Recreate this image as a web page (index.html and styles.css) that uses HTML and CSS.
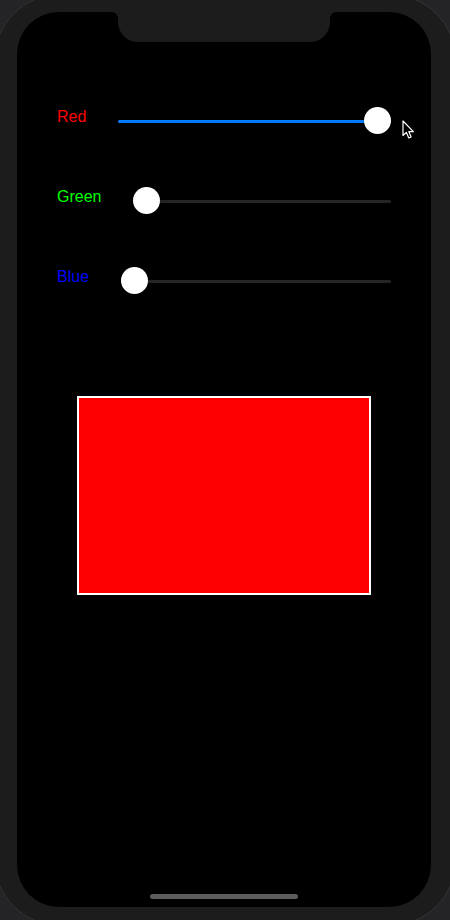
FILE: index.html
```html
<!DOCTYPE html>
<html lang="en">
<head>
<meta charset="utf-8">
<title>Color Sliders</title>
<link rel="stylesheet" href="styles.css">
</head>
<body>
<div class="device">
  <div class="screen">
    <div class="notch"></div>
    <div class="controls">
      <div class="row">
        <span class="label label-red">Red</span>
        <div class="slider">
          <div class="track"></div>
          <div class="fill" style="width: 100%"></div>
          <div class="thumb" style="left: calc((100% - 27px) * 1)"></div>
        </div>
      </div>
      <div class="row">
        <span class="label label-green">Green</span>
        <div class="slider">
          <div class="track"></div>
          <div class="fill" style="width: 0%"></div>
          <div class="thumb" style="left: calc((100% - 27px) * 0)"></div>
        </div>
      </div>
      <div class="row">
        <span class="label label-blue">Blue</span>
        <div class="slider">
          <div class="track"></div>
          <div class="fill" style="width: 0%"></div>
          <div class="thumb" style="left: calc((100% - 27px) * 0)"></div>
        </div>
      </div>
    </div>
    <div class="swatch"></div>
    <div class="home-indicator"></div>
    <svg class="cursor" width="13" height="20" viewBox="0 0 13 20">
      <path d="M1 1 L1 15.5 L4.4 12.4 L6.8 18 L9.1 17 L6.8 11.6 L11.4 11.6 Z" fill="#000" stroke="#fff" stroke-width="1.2" stroke-linejoin="round"/>
    </svg>
  </div>
</div>
</body>
</html>
```
FILE: styles.css
```css
html, body {
  margin: 0;
  padding: 0;
  height: 100%;
  overflow: hidden;
  background: #242426;
}

.device {
  margin: -6px 0 0 -6px;
  width: 462px;
  height: 932px;
  box-sizing: border-box;
  border: 1px solid #343436;
  border-radius: 66px;
  background: #1c1c1c;
  padding: 17px 0 0 22px;
}

.screen {
  position: relative;
  width: 414px;
  height: 895px;
  background: #000;
  border-radius: 42px;
  overflow: hidden;
}

.notch {
  position: absolute;
  top: 0;
  left: 101px;
  width: 212px;
  height: 30px;
  background: #1c1c1c;
  border-radius: 0 0 20px 20px;
}

.notch::before,
.notch::after {
  content: "";
  position: absolute;
  top: 0;
  width: 6px;
  height: 6px;
}

.notch::before {
  left: -6px;
  background: radial-gradient(circle at 0 6px, transparent 5.5px, #1c1c1c 6px);
}

.notch::after {
  right: -6px;
  background: radial-gradient(circle at 6px 6px, transparent 5.5px, #1c1c1c 6px);
}

.controls {
  display: flex;
  flex-direction: column;
  gap: 52px;
  padding: 95px 40px 0 40px;
}

.row {
  display: flex;
  align-items: flex-start;
  gap: 32px;
  height: 28px;
}

.label {
  font-family: "Liberation Sans", Arial, sans-serif;
  font-size: 16px;
  line-height: 18px;
  padding-top: 1px;
}

.label-red { color: #ff0000; }
.label-green { color: #00ff00; }
.label-blue { color: #0000ff; }

.slider {
  position: relative;
  flex: 1;
  height: 28px;
}

.track,
.fill {
  position: absolute;
  left: 0;
  top: 12.5px;
  height: 3px;
  border-radius: 2px;
}

.track {
  right: 0;
  background: #252527;
}

.fill {
  background: #007aff;
}

.thumb {
  position: absolute;
  top: 0;
  width: 27px;
  height: 27px;
  border-radius: 50%;
  background: #fff;
  box-shadow: 0 1px 2px rgba(0, 0, 0, 0.3);
}

.swatch {
  margin: 101px auto 0;
  width: 294px;
  height: 199px;
  box-sizing: border-box;
  border: 2px solid #fff;
  background: #ff0000;
}

.home-indicator {
  position: absolute;
  left: 50%;
  bottom: 8px;
  width: 148px;
  height: 5px;
  margin-left: -74px;
  border-radius: 3px;
  background: #5c5c5e;
}

.cursor {
  position: absolute;
  left: 385px;
  top: 108px;
}
```
